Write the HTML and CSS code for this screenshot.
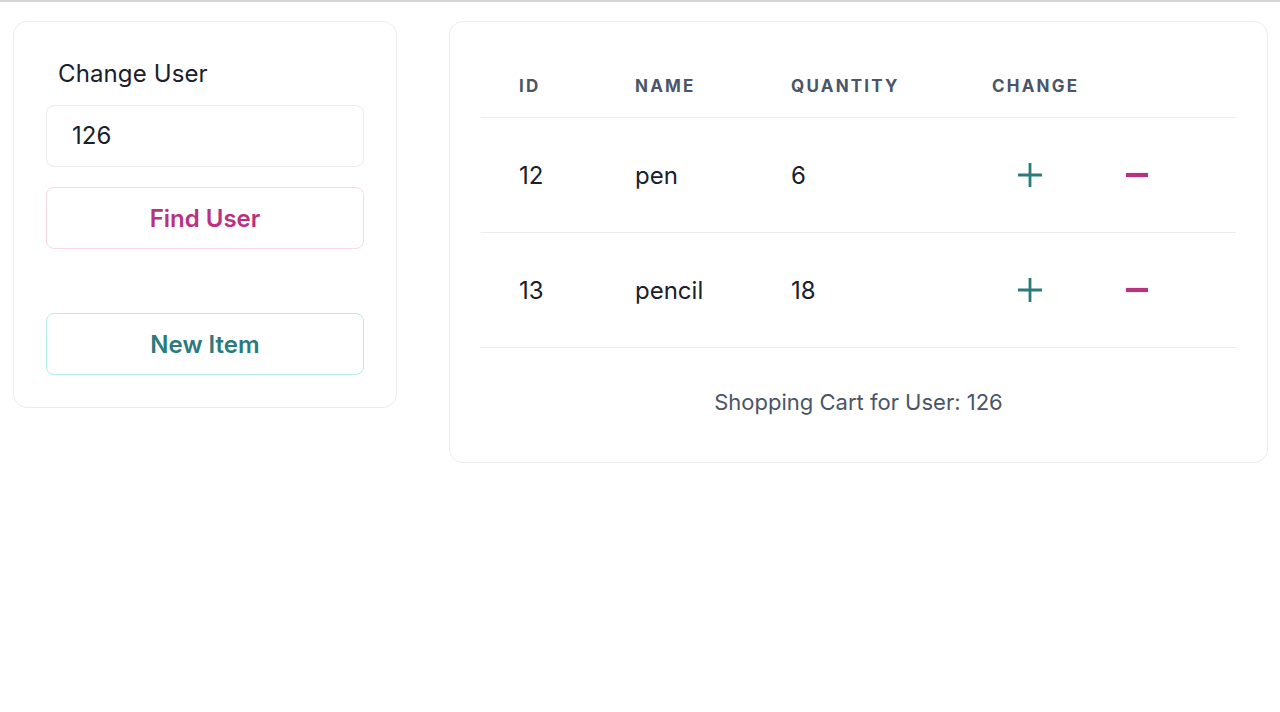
FILE: index.html
```html
<!DOCTYPE html>
<html>
<head>
<meta charset="utf-8">
<link rel="stylesheet" href="styles.css">
</head>
<body>
<div class="page">
  <section class="card side">
    <div class="label">Change User</div>
    <div class="input">126</div>
    <button class="btn btn-pink">Find User</button>
    <button class="btn btn-teal new">New Item</button>
  </section>
  <section class="card cart">
    <div class="table">
      <div class="row head">
        <div class="cell">ID</div>
        <div class="cell">NAME</div>
        <div class="cell">QUANTITY</div>
        <div class="cell">CHANGE</div>
      </div>
      <div class="row">
        <div class="cell">12</div>
        <div class="cell">pen</div>
        <div class="cell">6</div>
        <div class="cell actions">
          <button class="icon plus"><svg width="26" height="26" viewBox="0 0 26 26"><path d="M13 1v24M1 13h24" stroke="#2c7a7b" stroke-width="2.8" fill="none"/></svg></button>
          <button class="icon minus"><svg width="24" height="26" viewBox="0 0 24 26"><path d="M1 13h22" stroke="#b83280" stroke-width="4.2" fill="none"/></svg></button>
        </div>
      </div>
      <div class="row">
        <div class="cell">13</div>
        <div class="cell">pencil</div>
        <div class="cell">18</div>
        <div class="cell actions">
          <button class="icon plus"><svg width="26" height="26" viewBox="0 0 26 26"><path d="M13 1v24M1 13h24" stroke="#2c7a7b" stroke-width="2.8" fill="none"/></svg></button>
          <button class="icon minus"><svg width="24" height="26" viewBox="0 0 24 26"><path d="M1 13h22" stroke="#b83280" stroke-width="4.2" fill="none"/></svg></button>
        </div>
      </div>
    </div>
    <div class="caption">Shopping Cart for User: 126</div>
  </section>
</div>
</body>
</html>
```

FILE: styles.css
```css
* { box-sizing: border-box; }
html, body { margin: 0; padding: 0; background: #fff; }
body {
  border-top: 2px solid #d4d4d4;
  font-family: Inter, "Noto Sans", sans-serif;
  color: #1a202c;
  height: 712px;
}
.page {
  display: flex;
  align-items: flex-start;
  padding: 19px 12px 0 13px;
  gap: 52px;
}
.card {
  border: 1px solid #ececef;
  border-radius: 14px;
  background: #fff;
}
.side {
  width: 384px;
  padding: 31px 32px 32px;
  display: flex;
  flex-direction: column;
}
.label {
  font-size: 24px;
  line-height: 42px;
  padding-left: 12px;
  margin-bottom: 10px;
  color: #1a202c;
  letter-spacing: 0.005em;
}
.input {
  height: 62px;
  border: 1px solid #ececef;
  border-radius: 8px;
  font-size: 24px;
  line-height: 60px;
  padding-left: 25px;
  color: #1a202c;
}
.btn {
  height: 62px;
  border-radius: 8px;
  background: #fff;
  font-family: inherit;
  font-size: 24px;
  font-weight: 600;
  margin-top: 20px;
  width: 100%;
}
.btn-pink { border: 1px solid #fbd9e4; color: #b83280; }
.btn-teal { border: 1px solid #b6ede6; color: #2c7a7b; }
.btn.new { margin-top: 64px; }
.cart {
  flex: 1;
  padding: 31px 31px 0;
}
.table { display: flex; flex-direction: column; }
.row {
  display: grid;
  grid-template-columns: 116px 156px 201px 1fr;
  align-items: center;
  height: 115px;
  border-bottom: 1px solid #ececef;
  font-size: 24px;
}
.row.head {
  height: 65px;
  font-size: 17px;
  font-weight: 700;
  letter-spacing: 0.13em;
  color: #4a5568;
}
.cell { padding-left: 38px; }
.row.head .cell { padding-top: 2px; }
.actions {
  display: flex;
  align-items: center;
  gap: 81px;
  padding-left: 63px;
}
.icon {
  border: none;
  background: none;
  padding: 0;
  width: 26px;
  height: 26px;
  display: flex;
  align-items: center;
  justify-content: center;
}
.caption {
  text-align: center;
  font-size: 22px;
  color: #4a5568;
  line-height: 24px;
  padding: 42px 0 48px;
}
```
